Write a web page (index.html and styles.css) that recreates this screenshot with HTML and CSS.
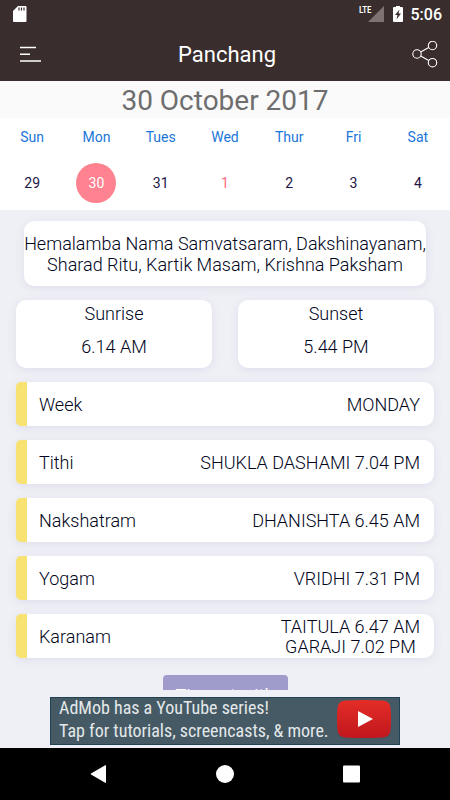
FILE: index.html
```
<!DOCTYPE html>
<html lang="en">
<head>
    <meta charset="UTF-8">
    <meta name="viewport" content="width=device-width, initial-scale=1">
    <title>Panchang</title>
    <link rel="stylesheet" href="styles.css">
</head>
<body>
    <div class="status-bar">
        <svg class="sd-icon" width="14" height="18" viewBox="0 0 14 18">
            <path fill="#fff" d="M5 1h7.500q1 0 1 1v14q0 1-1 1H1q-1 0-1-1V6z"/>
            <path stroke="#3a2d2d" stroke-width="1.200" d="M6 2.500v3M8.500 2.500v3M11 2.500v3"/>
        </svg>
        <div class="status-right">
            <span class="lte">LTE</span>
            <svg class="signal" width="16" height="16" viewBox="0 0 16 16">
                <path fill="#7d7373" d="M16 0v16H0z"/>
            </svg>
            <svg class="battery" width="10" height="16" viewBox="0 0 10 16">
                <path fill="#fff" d="M3 0h4v1h2q1 0 1 1v13q0 1-1 1H1q-1 0-1-1V2q0-1 1-1h2z"/>
                <path fill="#3a2d2d" d="M6.500 3.500L2 9h2.500l-1 4.500L8 7.500H5.500z"/>
            </svg>
            <span class="clock">5:06</span>
        </div>
    </div>

    <header class="app-bar">
        <button class="icon-btn" aria-label="Menu">
            <svg width="22" height="18" viewBox="0 0 22 18" fill="none" stroke="#fff" stroke-width="1.500">
                <path d="M0 1.500h16M0 8.200h10M0 15h21"/>
            </svg>
        </button>
        <h1>Panchang</h1>
        <button class="icon-btn" aria-label="Share">
            <svg width="26" height="28" viewBox="0 0 26 28" fill="none" stroke="#fff" stroke-width="1.100">
                <circle cx="5" cy="13" r="4.200"/>
                <circle cx="20.500" cy="4.500" r="4.200"/>
                <circle cx="20.500" cy="21.700" r="4.200"/>
                <path d="M8.700 11l8-4.600M8.700 15.100l8 4.500"/>
            </svg>
        </button>
    </header>

    <main>
        <h2 class="date-title">30 October 2017</h2>
        <table class="week">
            <thead>
                <tr>
                    <th>Sun</th>
                    <th>Mon</th>
                    <th>Tues</th>
                    <th>Wed</th>
                    <th>Thur</th>
                    <th>Fri</th>
                    <th>Sat</th>
                </tr>
            </thead>
            <tbody>
                <tr>
                    <td>29</td>
                    <td><span class="selected">30</span></td>
                    <td>31</td>
                    <td class="today">1</td>
                    <td>2</td>
                    <td>3</td>
                    <td>4</td>
                </tr>
            </tbody>
        </table>

        <div class="content">
            <p class="card summary">Hemalamba Nama Samvatsaram, Dakshinayanam, Sharad Ritu, Kartik Masam, Krishna Paksham</p>

            <div class="sun">
                <div class="card sun-card">
                    <span>Sunrise</span>
                    <span>6.14 AM</span>
                </div>
                <div class="card sun-card">
                    <span>Sunset</span>
                    <span>5.44 PM</span>
                </div>
            </div>

            <dl class="details">
                <div class="card row"><dt>Week</dt><dd>MONDAY</dd></div>
                <div class="card row"><dt>Tithi</dt><dd>SHUKLA DASHAMI 7.04 PM</dd></div>
                <div class="card row"><dt>Nakshatram</dt><dd>DHANISHTA 6.45 AM</dd></div>
                <div class="card row"><dt>Yogam</dt><dd>VRIDHI 7.31 PM</dd></div>
                <div class="card row"><dt>Karanam</dt><dd>TAITULA 6.47 AM<br>GARAJI 7.02 PM</dd></div>
            </dl>

            <div class="more">
                <button class="more-btn">Time at with</button>
            </div>
        </div>
    </main>

    <footer>
        <div class="ad-strip">
            <a class="ad" href="#">
                <span>AdMob has a YouTube series!<br>Tap for tutorials, screencasts, &amp; more.</span>
                <svg width="54" height="38" viewBox="0 0 54 38">
                    <defs>
                        <linearGradient id="red" x1="0" y1="0" x2="0" y2="1">
                            <stop offset="0" stop-color="#e52d27"/>
                            <stop offset="1" stop-color="#bf171d"/>
                        </linearGradient>
                    </defs>
                    <path fill="url(#red)" d="M8 .5Q27-.5 46 .5Q53 1 53.500 8Q54.500 19 53.500 30Q53 37 46 37.500Q27 38.500 8 37.500Q1 37 .5 30Q-.5 19 .5 8Q1 1 8 .5z"/>
                    <path fill="#fff" d="M21 11l15 8-15 8z"/>
                </svg>
            </a>
        </div>
        <nav class="nav-bar">
            <button aria-label="Back">
                <svg width="18" height="18" viewBox="0 0 18 18"><path fill="#fff" d="M16 .5v17q0 .8-.8.3L1 9.500q-.6-.5 0-1L15.200.3q.8-.4.8.2z"/></svg>
            </button>
            <button aria-label="Home">
                <svg width="18" height="18" viewBox="0 0 18 18"><circle cx="9" cy="9" r="9" fill="#fff"/></svg>
            </button>
            <button aria-label="Recent apps">
                <svg width="18" height="18" viewBox="0 0 18 18"><rect x="1" y=".5" width="17" height="17" rx="1" fill="#fff"/></svg>
            </button>
        </nav>
    </footer>
</body>
</html>
```
FILE: styles.css
```
* {
    box-sizing: border-box;
}

body {
    margin: 0;
    height: 100vh;
    display: flex;
    flex-direction: column;
    background-color: #eff0f5;
    font-family: Roboto, "Liberation Sans", sans-serif;
    font-size: 18px;
    line-height: 21px;
    color: #00041a;
}

h1, h2, p, dl, dd {
    margin: 0;
}

h1, h2 {
    font-weight: 400;
}

button {
    border: none;
    padding: 0;
    background: none;
    font: inherit;
    cursor: pointer;
}

svg {
    display: block;
}

.status-bar {
    display: flex;
    justify-content: space-between;
    align-items: center;
    height: 28px;
    padding: 0 8px 0 13px;
    background-color: #3a2d2d;
    color: white;
}

.status-right {
    display: flex;
    align-items: center;
}

.lte {
    align-self: flex-start;
    margin-right: -4px;
    font-family: "Roboto Condensed", Roboto, sans-serif;
    font-size: 9px;
    font-weight: 500;
    line-height: 12px;
}

.battery {
    margin: 0 8px 0 9px;
}

.clock {
    font-size: 16px;
    font-weight: 500;
}

.app-bar {
    display: flex;
    justify-content: space-between;
    align-items: center;
    height: 53px;
    padding: 0 12px 0 20px;
    background-color: #3a2d2d;
    color: white;
}

.app-bar h1 {
    font-size: 22px;
    line-height: 26px;
}

.date-title {
    height: 37px;
    background-color: #fafafa;
    color: #6e6e6e;
    font-size: 28px;
    line-height: 40px;
    text-align: center;
}

.week {
    width: 100%;
    table-layout: fixed;
    border-collapse: collapse;
    background-color: white;
    font-size: 14px;
    text-align: center;
}

.week th {
    height: 38px;
    padding: 0;
    color: #1976d9;
    font-weight: 400;
}

.week td {
    height: 54px;
    padding: 0;
    color: #1d1747;
}

.week .today {
    color: #ff6b81;
}

.week .selected {
    display: block;
    width: 40px;
    margin: 0 auto;
    border-radius: 50%;
    background-color: #ff8290;
    color: white;
    line-height: 40px;
}

main {
    flex: 1;
    min-height: 0;
    display: flex;
    flex-direction: column;
    overflow: hidden;
    margin-bottom: 7px;
}

.content {
    padding: 11px 16px 0;
    font-weight: 350;
}

.card {
    border-radius: 10px;
    background-color: white;
    box-shadow: 0 2px 8px #dedded;
}

.summary {
    margin: 0 8px;
    padding: 12px 0 11px;
    text-align: center;
}

.sun {
    display: grid;
    grid-template-columns: 1fr 1fr;
    gap: 26px;
    margin: 14px 0;
}

.sun-card {
    display: flex;
    flex-direction: column;
    align-items: center;
    gap: 12px;
    padding: 3px 0 11px;
}

.details {
    display: grid;
    gap: 14px;
}

.row {
    display: flex;
    justify-content: space-between;
    align-items: center;
    min-height: 44px;
    padding: 1px 14px 0 12px;
    border-left: 11px solid #f7e272;
    border-radius: 5px 10px 10px 5px;
}

.row dd {
    text-align: center;
    line-height: 20px;
}

.more {
    margin-top: 17px;
    text-align: center;
}

.more-btn {
    width: 125px;
    padding: 10px 0;
    border-radius: 4px;
    background-color: #9f9bca;
    color: white;
    font-weight: 400;
}

.ad-strip {
    display: flex;
    justify-content: center;
    padding-bottom: 3px;
}

.ad {
    display: flex;
    justify-content: space-between;
    align-items: center;
    width: 350px;
    height: 48px;
    padding: 0 8px 4px;
    border: 1px solid #1f4354;
    background-color: #455a64;
    color: #e4e8ea;
    font-family: "Roboto Condensed", Roboto, sans-serif;
    line-height: 23px;
    text-decoration: none;
    white-space: nowrap;
}

.nav-bar {
    display: flex;
    justify-content: center;
    align-items: center;
    gap: 108px;
    height: 52px;
    background-color: black;
}
```
